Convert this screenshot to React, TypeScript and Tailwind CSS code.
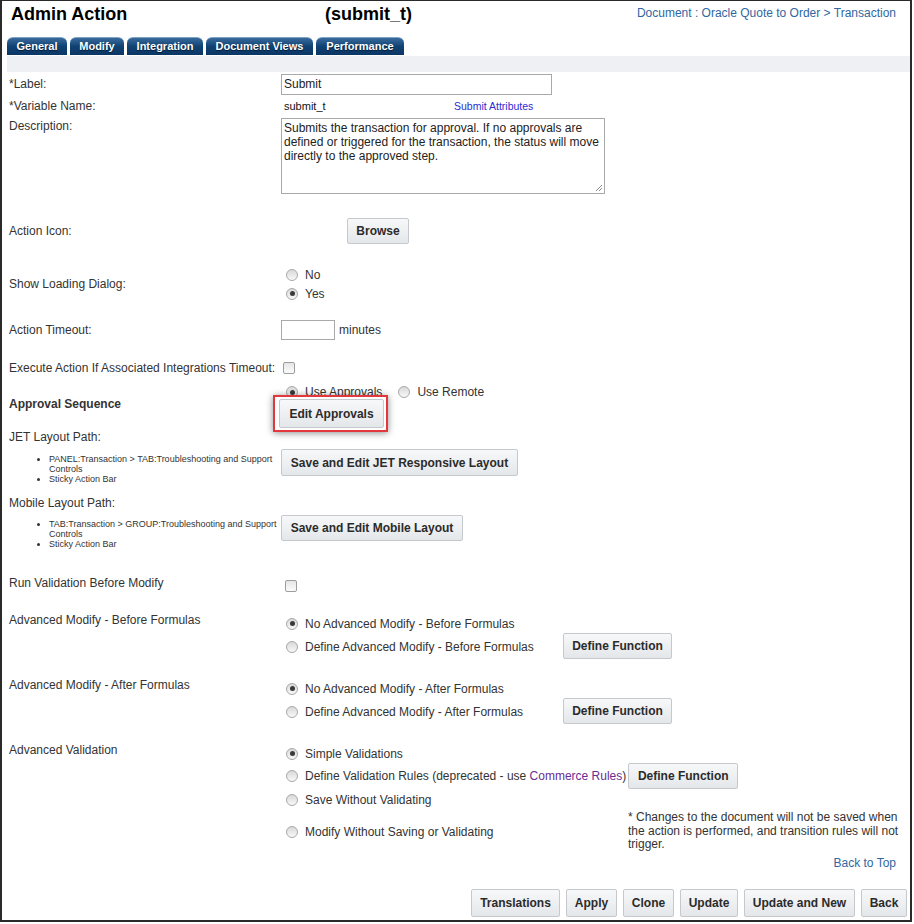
import React from "react";

function Btn({ children, className = "" }: { children: React.ReactNode; className?: string }) {
  return (
    <button
      className={`shrink-0 border border-[#c5c9ce] rounded-[2px] bg-linear-to-b from-[#f7f8f9] to-[#e4e7ea] text-[12px] font-bold text-[#2b2b2b] leading-none ${className}`}
    >
      {children}
    </button>
  );
}

function Radio({ checked = false }: { checked?: boolean }) {
  return (
    <span className="inline-flex w-[12px] h-[12px] shrink-0 rounded-full border border-[#a8a8a8] bg-linear-to-b from-[#d9d9d9] to-[#f8f8f8] items-center justify-center">
      {checked && <span className="w-[5px] h-[5px] rounded-full bg-[#3a3a3a]" />}
    </span>
  );
}

function Check() {
  return <span className="inline-block w-[12px] h-[12px] shrink-0 rounded-[2px] border border-[#9d9d9d] bg-linear-to-b from-[#e6e6e6] to-[#fbfbfb]" />;
}

function RadioLine({ checked, children, h = "h-[23px]" }: { checked?: boolean; children: React.ReactNode; h?: string }) {
  return (
    <div className={`flex items-center ${h}`}>
      <span className="ml-[5px] mr-[7px] flex">
        <Radio checked={checked} />
      </span>
      <span className="text-[12px] leading-[14px] whitespace-nowrap">{children}</span>
    </div>
  );
}

const tabs = [
  { name: "General", w: "w-[60px]" },
  { name: "Modify", w: "w-[54px]" },
  { name: "Integration", w: "w-[76px]" },
  { name: "Document Views", w: "w-[107px]" },
  { name: "Performance", w: "w-[88px]" },
];

export default function App() {
  return (
    <div className="w-[914px] h-[924px] bg-white font-['Liberation_Sans',Arial,sans-serif] text-[#333]">
      <div className="w-[912px] h-[922px] border-x-2 border-b-2 border-t border-[#2a2a2a] flex flex-col">
        {/* header */}
        <div className="h-[36px] flex items-start">
          <div className="pl-[9px] w-[323px] pt-[2px] text-[18px] leading-[22px] font-bold text-black">Admin Action</div>
          <div className="pt-[2px] text-[18px] leading-[22px] font-bold text-black">(submit_t)</div>
          <div className="ml-auto pr-[14px] mt-[5px] text-[12px] leading-[14px] text-[#2f689f]">
            Document : Oracle Quote to Order &gt; Transaction
          </div>
        </div>

        {/* tabs */}
        <div className="h-[18px] flex gap-[3px] pl-[5px]">
          {tabs.map((t) => (
            <div
              key={t.name}
              className={`${t.w} h-[18px] rounded-t-[6px] border-t border-[#7fa3c6] bg-linear-to-b from-[#386b9c] via-[#0f4273] to-[#0b3664] text-white text-[11px] font-bold flex items-center justify-center [text-shadow:0_1px_1px_#021a33]`}
            >
              {t.name}
            </div>
          ))}
        </div>
        <div className="h-[1px]" />
        <div className="h-[16px] ml-[5px] bg-[#eff0f4]" />

        {/* form */}
        <div className="pl-[7px] flex flex-col text-[12px] leading-[14px]">
          <div className="h-[24px] flex items-center">
            <div className="w-[272px]">*Label:</div>
            <div className="w-[271px] h-[21px] border border-[#a9a9a9] px-[2px] flex items-center text-[#222]">Submit</div>
          </div>

          <div className="h-[20px] flex items-center">
            <div className="w-[272px]">*Variable Name:</div>
            <div className="w-[173px] pl-[3px] text-[11px] text-[#111]">submit_t</div>
            <div className="text-[10.5px] text-[#2b2bd0]">Submit Attributes</div>
          </div>

          <div className="h-[81px] flex items-start">
            <div className="w-[272px] pt-[3px]">Description:</div>
            <div className="relative mt-[2px] w-[324px] h-[76px] border border-[#a9a9a9] px-[2px] pt-[2px] text-[#222] whitespace-nowrap">
              Submits the transaction for approval. If no approvals are
              <br />
              defined or triggered for the transaction, the status will move
              <br />
              directly to the approved step.
              <svg className="absolute right-[1px] bottom-[1px]" width="9" height="9" viewBox="0 0 9 9">
                <path d="M8 2L2 8M8 5L5 8" stroke="#8a8a8a" strokeWidth="1" />
              </svg>
            </div>
          </div>

          <div className="h-[68px] flex items-center">
            <div className="w-[272px]">Action Icon:</div>
            <Btn className="ml-[66px] w-[62px] h-[26px]">Browse</Btn>
          </div>

          <div className="h-[38px] flex items-center">
            <div className="w-[272px]">Show Loading Dialog:</div>
            <div className="flex flex-col">
              <RadioLine h="h-[19px]">No</RadioLine>
              <RadioLine h="h-[19px]" checked>
                Yes
              </RadioLine>
            </div>
          </div>

          <div className="h-[54px] flex items-center">
            <div className="w-[272px]">Action Timeout:</div>
            <div className="w-[54px] h-[20px] border border-[#a9a9a9]" />
            <span className="ml-[4px]">minutes</span>
          </div>

          <div className="h-[22px] flex items-center">
            <span>Execute Action If Associated Integrations Timeout:</span>
            <span className="ml-[8px] flex">
              <Check />
            </span>
          </div>

          <div className="h-[51px] flex items-start">
            <div className="w-[272px] mt-[18px] font-bold">Approval Sequence</div>
            <div className="flex flex-col pt-[4px]">
              <div className="h-[18px] flex items-center">
                <span className="ml-[5px] mr-[7px] flex">
                  <Radio checked />
                </span>
                <span>Use Approvals</span>
                <span className="ml-[16px] mr-[7px] flex">
                  <Radio />
                </span>
                <span>Use Remote</span>
              </div>
              <div className="relative mt-[-6px] ml-[-8px] w-fit border-2 border-[#e2373c] pl-[4px] pr-[2px] py-[2px] bg-white shadow-[0_1px_7px_rgba(0,0,0,0.45)]">
                <Btn className="w-[105px] h-[29px]">Edit Approvals</Btn>
              </div>
            </div>
          </div>

          <div className="h-[14px]">JET Layout Path:</div>
          <div className="h-[52px] flex items-start">
            <ul className="w-[272px] pt-[10px] pl-[40px] pr-[4px] list-disc text-[9px] leading-[10px]">
              <li>PANEL:Transaction &gt; TAB:Troubleshooting and Support Controls</li>
              <li>Sticky Action Bar</li>
            </ul>
            <Btn className="mt-[5px] w-[237px] h-[27px]">Save and Edit JET Responsive Layout</Btn>
          </div>

          <div className="h-[14px]">Mobile Layout Path:</div>
          <div className="h-[60px] flex items-start">
            <ul className="w-[272px] pt-[9px] pl-[40px] pr-[4px] list-disc text-[9px] leading-[10px]">
              <li>TAB:Transaction &gt; GROUP:Troubleshooting and Support Controls</li>
              <li>Sticky Action Bar</li>
            </ul>
            <Btn className="mt-[5px] w-[182px] h-[26px]">Save and Edit Mobile Layout</Btn>
          </div>

          <div className="h-[42px] flex items-start">
            <div className="w-[272px] pt-[6px]">Run Validation Before Modify</div>
            <span className="mt-[10px] ml-[4px] flex">
              <Check />
            </span>
          </div>

          <div className="h-[65px] flex items-start">
            <div className="w-[272px] pt-[1px]">Advanced Modify - Before Formulas</div>
            <div className="w-[282px] flex flex-col">
              <RadioLine checked>No Advanced Modify - Before Formulas</RadioLine>
              <RadioLine>Define Advanced Modify - Before Formulas</RadioLine>
            </div>
            <Btn className="mt-[21px] w-[109px] h-[26px]">Define Function</Btn>
          </div>

          <div className="h-[65px] flex items-start">
            <div className="w-[272px] pt-[1px]">Advanced Modify - After Formulas</div>
            <div className="w-[282px] flex flex-col">
              <RadioLine checked>No Advanced Modify - After Formulas</RadioLine>
              <RadioLine>Define Advanced Modify - After Formulas</RadioLine>
            </div>
            <Btn className="mt-[21px] w-[109px] h-[26px]">Define Function</Btn>
          </div>

          <div className="flex items-start">
            <div className="w-[272px] pt-[1px]">Advanced Validation</div>
            <div className="flex flex-col">
              <RadioLine checked>Simple Validations</RadioLine>
              <div className="mt-[-2px] h-[26px] flex items-center">
                <span className="ml-[5px] mr-[7px] flex">
                  <Radio />
                </span>
                <span className="whitespace-nowrap">
                  Define Validation Rules (deprecated - use <span className="text-[#6a2d93]">Commerce Rules</span>)
                </span>
                <Btn className="ml-[2px] w-[110px] h-[26px]">Define Function</Btn>
              </div>
              <RadioLine h="h-[22px]">Save Without Validating</RadioLine>
              <div className="flex items-start">
                <div className="w-[347px] h-[41px] flex items-center">
                  <span className="ml-[5px] mr-[7px] flex">
                    <Radio />
                  </span>
                  <span className="whitespace-nowrap">Modify Without Saving or Validating</span>
                </div>
                <div className="text-[12px] leading-[13.5px] whitespace-nowrap">
                  * Changes to the document will not be saved when
                  <br />
                  the action is performed, and transition rules will not
                  <br />
                  trigger.
                </div>
              </div>
            </div>
          </div>

          <div className="mt-[4px] h-[14px] pr-[14px] text-right text-[#2f689f]">Back to Top</div>

          <div className="mt-[19px] pr-[3px] flex justify-end gap-[6px]">
            <Btn className="w-[89px] h-[28px]">Translations</Btn>
            <Btn className="w-[51px] h-[28px]">Apply</Btn>
            <Btn className="w-[51px] h-[28px]">Clone</Btn>
            <Btn className="w-[58px] h-[28px]">Update</Btn>
            <Btn className="w-[111px] h-[28px]">Update and New</Btn>
            <Btn className="w-[46px] h-[28px]">Back</Btn>
          </div>
        </div>
      </div>
    </div>
  );
}
